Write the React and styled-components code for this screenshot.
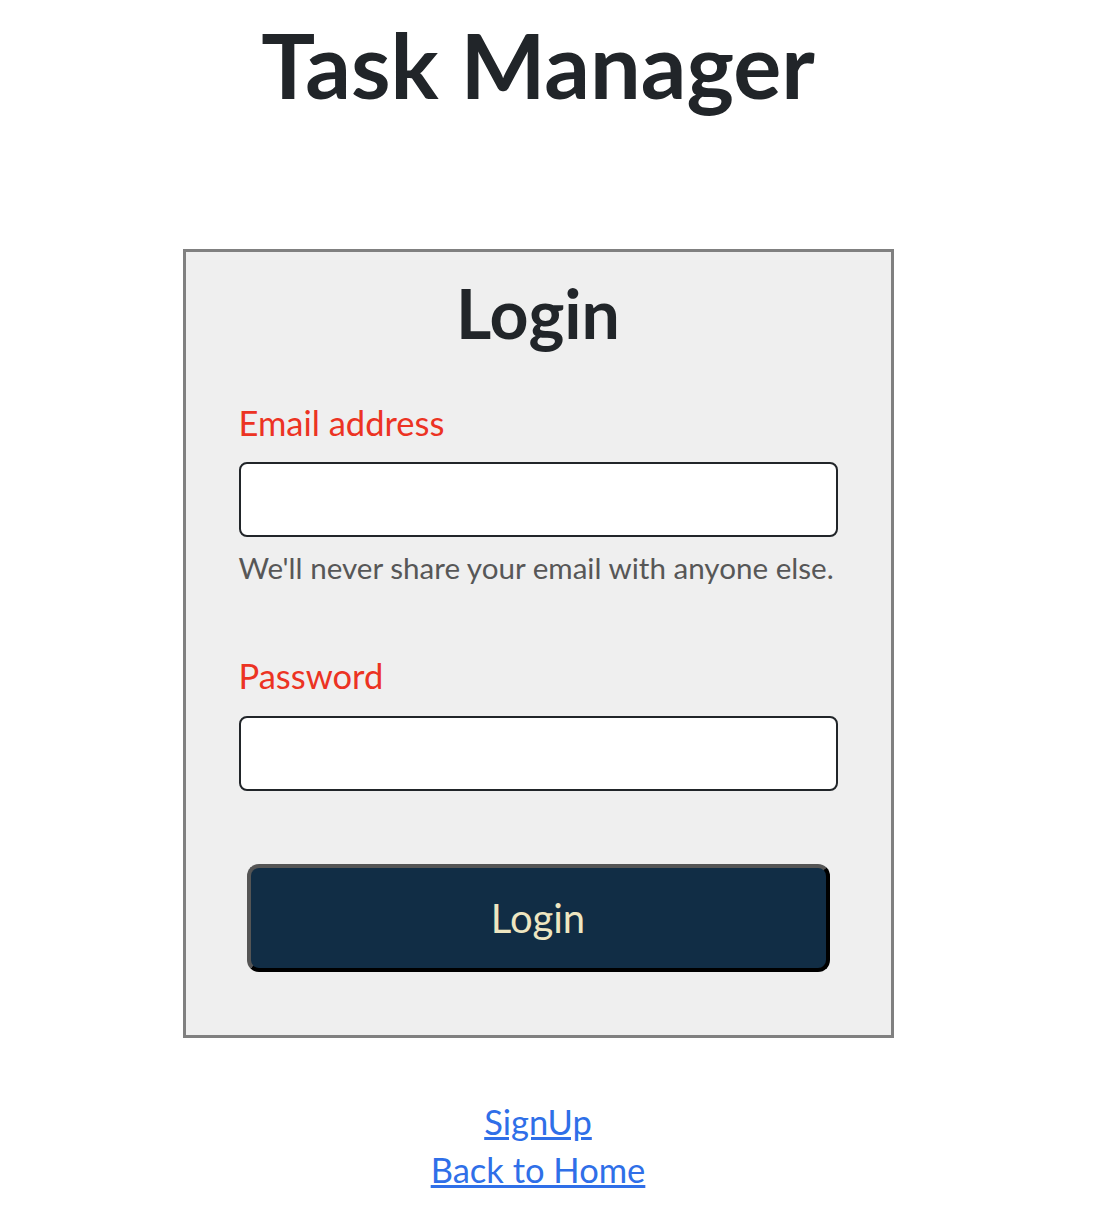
import React from "react";
import styled, { createGlobalStyle } from "styled-components";

const Global = createGlobalStyle`
  html, body { margin: 0; padding: 0; background: #ffffff; }
  body { font-family: "Lato", "Noto Sans", sans-serif; color: #212529; }
`;

const Page = styled.div`
  width: 1076px;
  display: flex;
  flex-direction: column;
  align-items: center;
`;

const Title = styled.h1`
  margin: 10px 0 0;
  font-size: 90px;
  font-weight: 700;
  line-height: 1.2;
  color: #212529;
`;

const Card = styled.form`
  margin-top: 131px;
  width: 711px;
  box-sizing: border-box;
  border: 3px solid #808080;
  background: #efefef;
  padding: 20px 53px 63px;
  display: flex;
  flex-direction: column;
`;

const CardTitle = styled.h2`
  margin: 0 0 48px;
  text-align: center;
  font-size: 68px;
  font-weight: 700;
  line-height: 1.2;
  color: #212529;
`;

const Field = styled.div`
  display: flex;
  flex-direction: column;
  margin-bottom: ${(p) => p.$mb}px;
`;

const Label = styled.label`
  font-size: 34.5px;
  color: #ec3323;
  line-height: 1.2;
  margin-bottom: 19px;
`;

const Input = styled.input`
  height: 75px;
  box-sizing: border-box;
  border: 2px solid #212529;
  border-radius: 8px;
  background: #ffffff;
  font-size: 28px;
  padding: 0 16px;
`;

const Help = styled.div`
  margin-top: 13px;
  font-size: 29.6px;
  color: #575757;
  line-height: 1.2;
`;

const Button = styled.button`
  margin: 0 8px;
  height: 108px;
  border-radius: 12px;
  border: 4px solid;
  border-color: #555555 #000000 #000000 #555555;
  background: #112d45;
  color: #eee6c1;
  font-family: inherit;
  font-size: 40px;
`;

const Links = styled.div`
  margin-top: 60px;
  display: flex;
  flex-direction: column;
  align-items: center;
`;

const Link = styled.a`
  font-size: 34.5px;
  line-height: 48px;
  color: #2f6fe8;
  text-decoration: underline;
`;

export default function App() {
  return (
    <>
      <Global />
      <Page>
        <Title>Task Manager</Title>
        <Card onSubmit={(e) => e.preventDefault()}>
          <CardTitle>Login</CardTitle>
          <Field $mb={70}>
            <Label htmlFor="email">Email address</Label>
            <Input id="email" type="email" />
            <Help>We'll never share your email with anyone else.</Help>
          </Field>
          <Field $mb={73}>
            <Label htmlFor="password">Password</Label>
            <Input id="password" type="password" />
          </Field>
          <Button type="submit">Login</Button>
        </Card>
        <Links>
          <Link href="#signup">SignUp</Link>
          <Link href="#home">Back to Home</Link>
        </Links>
      </Page>
    </>
  );
}
